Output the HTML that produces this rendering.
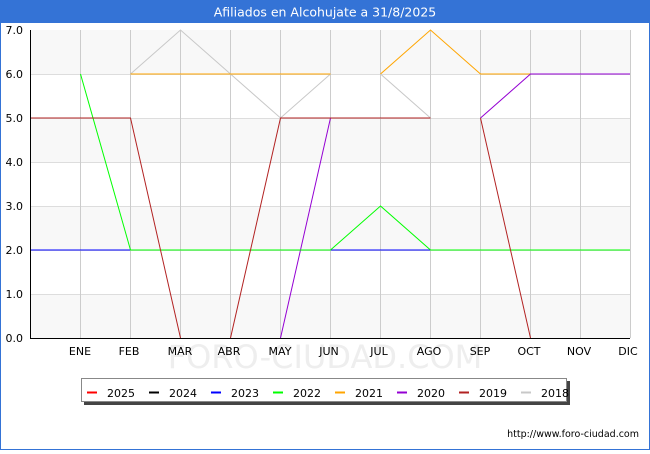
<!DOCTYPE html><html><head><style>body{margin:0;width:650px;height:450px;overflow:hidden;font-family:"DejaVu Sans","Liberation Sans",sans-serif}</style></head><body>
<svg width="650" height="450" xmlns="http://www.w3.org/2000/svg" font-family="DejaVu Sans, Liberation Sans, sans-serif">
<rect x="0" y="0" width="650" height="450" fill="#fff"/>
<rect x="0.5" y="0.5" width="649" height="449" fill="none" stroke="#3473d6"/>
<rect x="0" y="0" width="650" height="23" fill="#3473d6"/>
<text x="325" y="16.5" fill="#fff" font-size="12.5" text-anchor="middle">Afiliados en Alcohujate a 31/8/2025</text>
<g fill="#f8f8f8"><rect x="31" y="30" width="599" height="44"/><rect x="31" y="118" width="599" height="44"/><rect x="31" y="206" width="599" height="44"/><rect x="31" y="294" width="599" height="44"/></g>
<g stroke="#ddd" stroke-width="1"><path d="M31 74.5H630M31 118.5H630M31 162.5H630M31 206.5H630M31 250.5H630M31 294.5H630"/></g>
<g stroke="#ccc"><path d="M80.5 30V338M130.5 30V338M180.5 30V338M230.5 30V338M280.5 30V338M330.5 30V338M380.5 30V338M430.5 30V338M480.5 30V338M530.5 30V338M580.5 30V338M630.5 30V338"/></g>
<text x="325" y="368" font-size="32" fill="#eee" text-anchor="middle">FORO-CIUDAD.COM</text>
<path d="M30.5 30V338.5H630" fill="none" stroke="#000"/>
<g font-size="11" fill="#000" text-anchor="end"><text x="23" y="34">7.0</text><text x="23" y="78">6.0</text><text x="23" y="122">5.0</text><text x="23" y="166">4.0</text><text x="23" y="210">3.0</text><text x="23" y="254">2.0</text><text x="23" y="298">1.0</text><text x="23" y="342">0.0</text></g>
<g font-size="11" fill="#000" text-anchor="middle"><text x="80" y="355">ENE</text><text x="129" y="355">FEB</text><text x="180" y="355">MAR</text><text x="229" y="355">ABR</text><text x="280" y="355">MAY</text><text x="329" y="355">JUN</text><text x="379" y="355">JUL</text><text x="429" y="355">AGO</text><text x="480" y="355">SEP</text><text x="529" y="355">OCT</text><text x="579" y="355">NOV</text><text x="628" y="355">DIC</text></g>
<g fill="none" stroke-width="1">
<path d="M130.5 74L180.5 30L230.5 74L280.5 118L330.5 74M380.5 74L430.5 118" stroke="#c8c8c8"/>
<path d="M130.5 74H330.5M380.5 74L430.5 30L480.5 74H530.5" stroke="#ffa500"/>
<path d="M280.5 338L330.5 118M480.5 118L530.5 74H630" stroke="#9400d3"/>
<path d="M31 250H130.5M330.5 250H430.5" stroke="#0000ff"/>
<path d="M80.5 74L130.5 250H330.5L380.5 206L430.5 250H630" stroke="#00ff00"/>
<path d="M31 118H130.5L180.5 338M230.5 338L280.5 118H430.5M480.5 118L530.5 338" stroke="#b22222"/>
</g>
<rect x="84" y="381" width="486" height="24" fill="#444"/>
<rect x="81.5" y="378.5" width="485" height="23" fill="#fff" stroke="#888"/>
<g stroke-width="2"><path d="M87 392.5H97" stroke="#f00"/><path d="M149 392.5H159" stroke="#000"/><path d="M211 392.5H221" stroke="#00f"/><path d="M273 392.5H283" stroke="#0f0"/><path d="M335 392.5H345" stroke="#ffa500"/><path d="M397 392.5H407" stroke="#9400d3"/><path d="M459 392.5H469" stroke="#b22222"/><path d="M521 392.5H531" stroke="#c8c8c8"/></g>
<g font-size="11" fill="#000"><text x="107" y="397">2025</text><text x="169" y="397">2024</text><text x="231" y="397">2023</text><text x="293" y="397">2022</text><text x="355" y="397">2021</text><text x="417" y="397">2020</text><text x="479" y="397">2019</text><text x="541" y="397">2018</text></g>
<text x="639" y="437" font-size="9.5" fill="#000" text-anchor="end">http://www.foro-ciudad.com</text>
</svg></body></html>
